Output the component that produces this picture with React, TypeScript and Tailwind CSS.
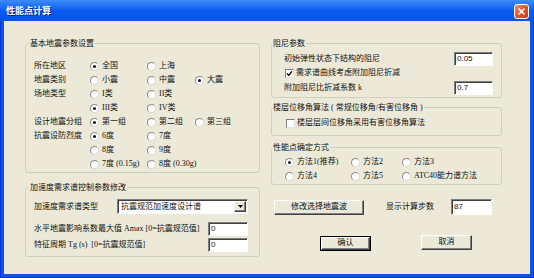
import React from 'react';

const Radio = ({ on, label }: { on?: boolean; label: string }) => (
  <div className="flex items-center gap-[3px] whitespace-pre">
    <span className="w-[9px] h-[9px] shrink-0 rounded-full bg-white border border-[#8c8c8c] border-r-[#d8d8d8] border-b-[#d8d8d8] flex items-center justify-center">
      {on && <span className="w-[3px] h-[3px] rounded-full bg-[#111]" />}
    </span>
    <span>{label}</span>
  </div>
);

const Check = ({ on }: { on?: boolean }) => (
  <span className="w-[9px] h-[9px] shrink-0 bg-white border border-t-[#7f7f7f] border-l-[#7f7f7f] border-r-[#e2e2e2] border-b-[#e2e2e2] flex items-center justify-center">
    {on && (
      <svg width="7" height="7" viewBox="0 0 7 7">
        <path d="M1 3.4 L2.8 5.2 L6 1.4" stroke="#000" strokeWidth="1.4" fill="none" />
      </svg>
    )}
  </span>
);

const Field = ({ value, className }: { value: string; className?: string }) => (
  <div className={`bg-white border border-t-[#7f7f7f] border-l-[#7f7f7f] border-r-white border-b-white shadow-[inset_1px_1px_0_#404040] pl-[2px] flex items-center text-[8px] font-['Liberation_Sans',sans-serif] ${className ?? ''}`}>
    {value}
  </div>
);

const Btn = ({ children, className }: { children: React.ReactNode; className?: string }) => (
  <div className={`flex items-center justify-center bg-[#ECE9D8] border border-t-white border-l-white border-r-[#404040] border-b-[#404040] shadow-[inset_-1px_-1px_0_#808080] ${className ?? ''}`}>
    {children}
  </div>
);

const Legend = ({ children, className }: { children: React.ReactNode; className?: string }) => (
  <div className={`-mt-[5px] self-start bg-[#ECE9D8] px-[1px] h-[9px] leading-[9px] whitespace-pre ${className ?? ''}`}>
    {children}
  </div>
);

const basic: [string, [string, boolean][]][] = [
  ['所在地区', [['全国', true], ['上海', false]]],
  ['地震类别', [['小震', false], ['中震', false], ['大震', true]]],
  ['场地类型', [['I类', false], ['II类', false]]],
  ['', [['III类', true], ['IV类', false]]],
  ['设计地震分组', [['第一组', true], ['第二组', false], ['第三组', false]]],
  ['抗震设防烈度', [['6度', true], ['7度', false]]],
  ['', [['8度', false], ['9度', false]]],
  ['', [['7度 (0.15g)', false], ['8度 (0.30g)', false]]],
];

const methods: [string, boolean][] = [
  ['方法1(推荐)', true],
  ['方法2', false],
  ['方法3', false],
  ['方法4', false],
  ['方法5', false],
  ['ATC40能力谱方法', false],
];

export default function App() {
  return (
    <div className="w-[534px] h-[278px] flex flex-col bg-[#0A55E4] border-l border-r border-b border-[#0831D9] text-[8px] leading-none text-[#111] font-['Liberation_Serif','Noto_Sans_CJK_SC',serif]">
      {/* title bar */}
      <div className="h-[21px] shrink-0 -mx-[1px] flex items-center justify-between pl-[6px] pr-[5px] bg-linear-to-b from-[#3d8cf8] via-[#0a5bef] to-[#0453e4]">
        <span className="text-white font-bold text-[9px] font-['Noto_Sans_CJK_SC',sans-serif] [text-shadow:1px_1px_0_#0a2a8c]">性能点计算</span>
        <div className="w-[15px] h-[15px] mt-[2px] rounded-[3px] border border-white bg-linear-to-br from-[#e9906f] via-[#e0552f] to-[#c7401c] flex items-center justify-center">
          <svg width="9" height="9" viewBox="0 0 9 9">
            <path d="M1.5 1.5 L7.5 7.5 M7.5 1.5 L1.5 7.5" stroke="#fff" strokeWidth="1.6" />
          </svg>
        </div>
      </div>

      {/* body */}
      <div className="flex-1 mx-[3px] mb-[3px] bg-[#ECE9D8] flex pl-[21px] pt-[22px] gap-[11px]">
        {/* left column */}
        <div className="w-[235px] flex flex-col">
          <div className="h-[130px] flex flex-col border border-[#D0D0BF] rounded-[3px]">
            <Legend className="ml-[3px]">基本地震参数设置</Legend>
            <div className="mt-[11px] pl-[8px] grid grid-cols-[56px_57px_48px_1fr] auto-rows-[14px] items-center">
              {basic.map(([label, opts], i) => (
                <React.Fragment key={i}>
                  <span>{label}</span>
                  {[0, 1, 2].map((j) =>
                    opts[j] ? <Radio key={j} label={opts[j][0]} on={opts[j][1]} /> : <span key={j} />
                  )}
                </React.Fragment>
              ))}
            </div>
          </div>

          <div className="mt-[14px] h-[70px] flex flex-col border border-[#D0D0BF] rounded-[3px]">
            <Legend className="ml-[3px]">加速度需求谱控制参数修改</Legend>
            <div className="mt-[7px] pl-[8px] h-[15px] flex items-center">
              <span className="w-[83px]">加速度需求谱类型</span>
              <div className="w-[131px] h-[15px] bg-white border border-t-[#7f7f7f] border-l-[#7f7f7f] border-r-white border-b-white shadow-[inset_1px_1px_0_#404040] flex items-center justify-between pl-[3px] pr-[1px]">
                <span>抗震规范加速度设计谱</span>
                <Btn className="w-[12px] h-[11px]">
                  <svg width="5" height="3" viewBox="0 0 5 3">
                    <path d="M0 0 H5 L2.5 3 Z" fill="#000" />
                  </svg>
                </Btn>
              </div>
            </div>
            <div className="mt-[7px] pl-[8px] h-[15px] flex items-center">
              <span className="w-[174px] whitespace-pre">水平地震影响系数最大值 Amax [0=抗震规范值]</span>
              <Field value="0" className="w-[40px] h-[14px]" />
            </div>
            <div className="mt-[1px] pl-[8px] h-[15px] flex items-center">
              <span className="w-[174px] whitespace-pre">特征周期 Tg (s)  [0=抗震规范值]</span>
              <Field value="0" className="w-[40px] h-[14px]" />
            </div>
          </div>
        </div>

        {/* right column */}
        <div className="w-[231px] flex flex-col">
          <div className="h-[55px] flex flex-col border border-[#D0D0BF] rounded-[3px]">
            <Legend>阻尼参数</Legend>
            <div className="mt-[4px] h-[14px] pl-[12px] pr-[8px] flex items-center justify-between">
              <span>初始弹性状态下结构的阻尼</span>
              <Field value="0.05" className="w-[39px] h-[14px]" />
            </div>
            <div className="h-[14px] pl-[13px] flex items-center gap-[2px]">
              <Check on />
              <span>需求谱曲线考虑附加阻尼折减</span>
            </div>
            <div className="mt-[1px] h-[14px] pl-[12px] pr-[8px] flex items-center justify-between">
              <span>附加阻尼比折减系数 k</span>
              <Field value="0.7" className="w-[39px] h-[14px]" />
            </div>
          </div>

          <div className="mt-[9px] h-[29px] flex flex-col border border-[#D0D0BF] rounded-[3px]">
            <Legend>楼层位移角算法 ( 常规位移角/有害位移角 )</Legend>
            <div className="mt-[4px] h-[14px] pl-[14px] flex items-center gap-[2px]">
              <Check />
              <span>楼层层间位移角采用有害位移角算法</span>
            </div>
          </div>

          <div className="mt-[11px] h-[38px] flex flex-col border border-[#D0D0BF] rounded-[3px]">
            <Legend>性能点确定方式</Legend>
            <div className="mt-[3px] pl-[13px] grid grid-cols-[66px_51px_1fr] auto-rows-[14px] items-center">
              {methods.map(([label, on]) => (
                <Radio key={label} label={label} on={on} />
              ))}
            </div>
          </div>

          <div className="mt-[14px] h-[16px] flex items-center">
            <Btn className="ml-[3px] w-[90px] h-[15px]">修改选择地震波</Btn>
            <span className="ml-[22px] w-[65px]">显示计算步数</span>
            <Field value="87" className="w-[41px] h-[16px]" />
          </div>

          <div className="mt-[20px] h-[16px] flex items-center">
            <div className="ml-[49px] w-[51px] h-[15px] border border-black flex">
              <Btn className="flex-1">确认</Btn>
            </div>
            <Btn className="ml-[50px] w-[51px] h-[15px] -mt-[2px]">取消</Btn>
          </div>
        </div>
      </div>
    </div>
  );
}
